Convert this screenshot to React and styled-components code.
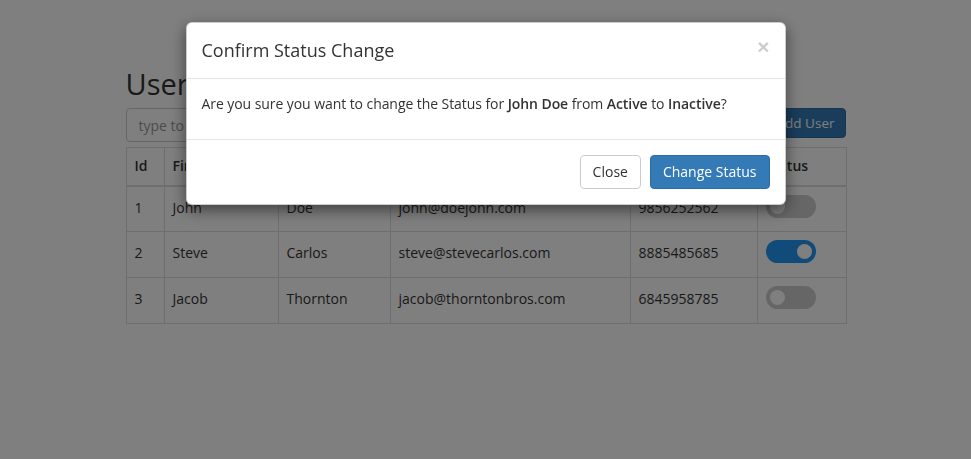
import React from 'react';
import styled, { createGlobalStyle, css } from 'styled-components';

const GlobalStyle = createGlobalStyle`
    * { box-sizing: border-box; }
    body {
        margin: 0;
        background: #fff;
        font-family: 'Open Sans', 'Liberation Sans', sans-serif;
        font-size: 14px;
        line-height: 1.42857;
        color: #333;
    }
`;

const Container = styled.div`
    width: 750px;
    margin: 0 auto;
    padding: 0 15px;
`;

const Title = styled.h2`
    margin: 69px 0 10px;
    font-size: 29px;
    font-weight: 400;
    line-height: 1;
`;

const Toolbar = styled.div`
    display: flex;
    justify-content: space-between;
    align-items: flex-start;
    margin-top: 1px;
    margin-bottom: 5px;
`;

const SearchInput = styled.input`
    width: 280px;
    height: 34px;
    padding: 6px 12px;
    font: inherit;
    color: #555;
    border: 1px solid #ccc;
    border-radius: 4px;
    &::placeholder { color: #999; }
`;

const Button = styled.button`
    display: inline-block;
    padding: 6px 12px;
    font: inherit;
    font-size: 14px;
    line-height: 20px;
    border: 1px solid transparent;
    border-radius: 4px;
    cursor: pointer;
    ${p => p.$primary ? css`
        color: #fff;
        background: #337ab7;
        border-color: #2e6da4;
    ` : css`
        color: #333;
        background: #fff;
        border-color: #ccc;
    `}
`;

const SmallButton = styled(Button)`
    padding: 4px 10px;
    height: 30px;
    font-size: 13.5px;
`;

const Table = styled.table`
    width: 100%;
    border-collapse: collapse;
    border: 1px solid #ddd;
    table-layout: fixed;
`;

const Th = styled.th`
    width: ${p => p.$w}px;
    padding: 8px;
    text-align: left;
    font-weight: 600;
    border: 1px solid #ddd;
    border-bottom-width: 2px;
    height: 38px;
`;

const Td = styled.td`
    padding: ${p => p.$control ? '8px' : '11px'} 8px 0;
    height: 46px;
    border: 1px solid #ddd;
    vertical-align: top;
`;

const Switch = styled.span`
    display: block;
    position: relative;
    width: 50px;
    height: 23px;
    border-radius: 12px;
    background: ${p => p.$on ? '#2196f3' : '#ccc'};
    &::after {
        content: '';
        position: absolute;
        top: 4px;
        left: ${p => p.$on ? '31px' : '4px'};
        width: 15px;
        height: 15px;
        border-radius: 50%;
        background: #fff;
    }
`;

const Backdrop = styled.div`
    position: fixed;
    inset: 0;
    background: rgba(0, 0, 0, 0.5);
`;

const Dialog = styled.div`
    position: fixed;
    top: 22px;
    left: calc(50% - 300px);
    width: 600px;
    background: #fff;
    border: 1px solid rgba(0, 0, 0, 0.2);
    border-radius: 6px;
    box-shadow: 0 5px 15px rgba(0, 0, 0, 0.5);
`;

const DialogHeader = styled.div`
    display: flex;
    justify-content: space-between;
    align-items: flex-start;
    padding: 15px 15px 14px;
    border-bottom: 1px solid #e5e5e5;
`;

const DialogTitle = styled.h4`
    margin: 0;
    font-size: 18px;
    font-weight: 400;
    line-height: 1.42857;
`;

const CloseX = styled.button`
    margin-top: -2px;
    padding: 0;
    background: none;
    border: 0;
    font-family: 'Liberation Sans', sans-serif;
    font-size: 21px;
    font-weight: 700;
    line-height: 1;
    color: #000;
    opacity: 0.2;
    cursor: pointer;
`;

const DialogBody = styled.div`
    padding: 15px;
    letter-spacing: -0.07px;
    p { margin: 0 0 10px; }
    b { font-weight: 600; }
`;

const DialogFooter = styled.div`
    display: flex;
    justify-content: flex-end;
    gap: 9px;
    padding: 15px;
    border-top: 1px solid #e5e5e5;
`;

const users = [
    { id: 1, first: 'John', last: 'Doe', email: 'john@doejohn.com', phone: '9856252562', on: false },
    { id: 2, first: 'Steve', last: 'Carlos', email: 'steve@stevecarlos.com', phone: '8885485685', on: true },
    { id: 3, first: 'Jacob', last: 'Thornton', email: 'jacob@thorntonbros.com', phone: '6845958785', on: false },
];

const columns = [
    ['Id', 38], ['First Name', 114], ['Last Name', 112], ['Email', 240], ['Phone', 127], ['Status', 89],
];

export default function App() {
    return (
        <>
            <GlobalStyle />
            <Container>
                <Title>Users</Title>
                <Toolbar>
                    <SearchInput placeholder="type to search" />
                    <SmallButton $primary>+ Add User</SmallButton>
                </Toolbar>
                <Table>
                    <thead>
                        <tr>
                            {columns.map(([name, w]) => <Th key={name} $w={w}>{name}</Th>)}
                        </tr>
                    </thead>
                    <tbody>
                        {users.map(u => (
                            <tr key={u.id}>
                                <Td>{u.id}</Td>
                                <Td>{u.first}</Td>
                                <Td>{u.last}</Td>
                                <Td>{u.email}</Td>
                                <Td>{u.phone}</Td>
                                <Td $control><Switch $on={u.on} /></Td>
                            </tr>
                        ))}
                    </tbody>
                </Table>
            </Container>
            <Backdrop />
            <Dialog>
                <DialogHeader>
                    <DialogTitle>Confirm Status Change</DialogTitle>
                    <CloseX>×</CloseX>
                </DialogHeader>
                <DialogBody>
                    <p>Are you sure you want to change the Status for <b>John Doe</b> from <b>Active</b> to <b>Inactive</b>?</p>
                </DialogBody>
                <DialogFooter>
                    <Button>Close</Button>
                    <Button $primary>Change Status</Button>
                </DialogFooter>
            </Dialog>
        </>
    );
}
